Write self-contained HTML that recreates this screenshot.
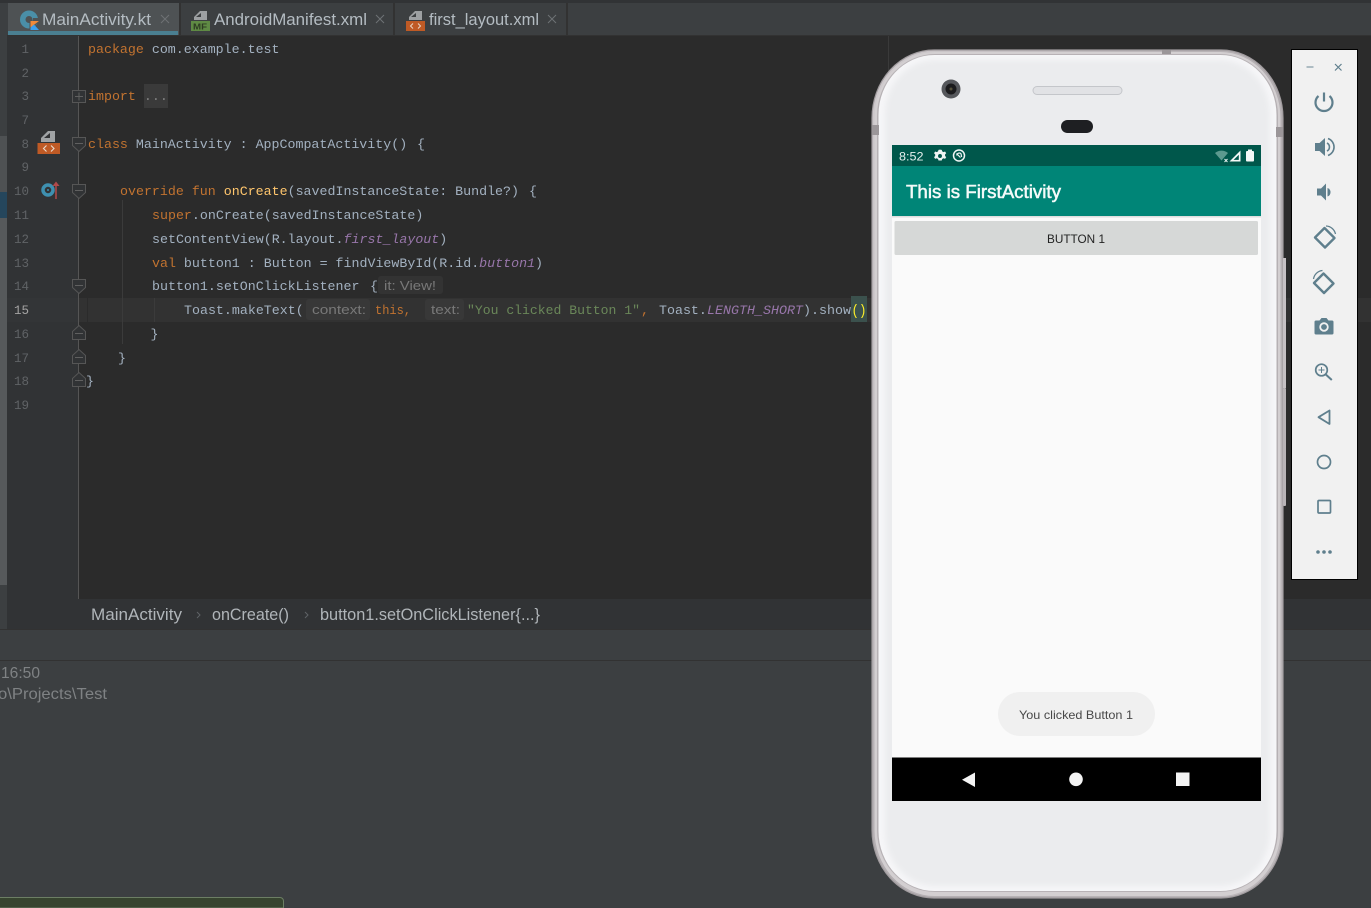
<!DOCTYPE html>
<html>
<head>
<meta charset="utf-8">
<style>
html,body{margin:0;padding:0;width:1371px;height:908px;overflow:hidden;background:#3c3f41}
svg{display:block;position:absolute;left:0;top:0}
text{white-space:pre}
.c{font-family:"Liberation Mono",monospace;font-size:13.3px;fill:#a3b1c0}
.k{fill:#c27330}.f{fill:#ffc66d}.p{fill:#9876aa;font-style:italic}.s{fill:#6a8759}
.n{font-family:"Liberation Mono",monospace;font-size:12.5px;fill:#606366;text-anchor:end}
.h{font-family:"Liberation Sans",sans-serif;font-size:13px;fill:#787878}
.t{font-family:"Liberation Sans",sans-serif;font-size:16.5px;fill:#b4bcc2}
.b{font-family:"Liberation Sans",sans-serif;font-size:16.5px;fill:#b0b5b9}
.o{font-family:"Liberation Sans",sans-serif;font-size:16px;fill:#7f8284}
.r{font-family:"Liberation Sans",sans-serif}
.fold{fill:#313335;stroke:#565656;stroke-width:1}
.ic{fill:#5f7f8d}.is{fill:none;stroke:#5f7f8d}
</style>
</head>
<body>
<svg width="1371" height="908" viewBox="0 0 1371 908" xmlns="http://www.w3.org/2000/svg">
<defs>
<linearGradient id="metal" x1="0" y1="0" x2="1" y2="1">
<stop offset="0" stop-color="#cfcacd"/><stop offset=".5" stop-color="#b3aeb1"/><stop offset="1" stop-color="#bdb8bb"/>
</linearGradient>
<filter id="soft" x="-5%" y="-5%" width="110%" height="110%"><feGaussianBlur stdDeviation="3"/></filter>
</defs>
<!-- base -->
<rect width="1371" height="908" fill="#3c3f41"/>
<rect x="0" y="0" width="1371" height="3" fill="#313335"/>
<!-- left strip -->
<rect x="0" y="136" width="7" height="56" fill="#4e5153"/>
<rect x="0" y="192" width="7" height="26" fill="#25465c"/>
<rect x="0" y="218" width="7" height="367" fill="#56595b"/>
<!-- editor -->
<rect x="7" y="35" width="1364" height="564" fill="#2b2b2b"/>
<rect x="7" y="35" width="72" height="564" fill="#313335"/>
<rect x="7" y="35" width="1364" height="1" fill="#323232"/>
<rect x="79" y="298" width="1292" height="24" fill="#323232"/>
<rect x="7" y="298" width="72" height="24" fill="#333537"/>
<line x1="78.5" y1="36" x2="78.5" y2="599" stroke="#555555"/>
<line x1="888.5" y1="36" x2="888.5" y2="599" stroke="#3a3a3a"/>
<line x1="122.5" y1="200" x2="122.5" y2="344" stroke="#3b3b3b"/>
<line x1="154.5" y1="298" x2="154.5" y2="322" stroke="#3b3b3b"/>
<line x1="87.5" y1="298" x2="87.5" y2="322" stroke="#2b2b2b"/>
<!-- tabs -->
<rect x="8" y="3" width="171" height="32" fill="#4e5254"/>
<rect x="8" y="31" width="170" height="4" fill="#4a7f91"/>
<rect x="179" y="3" width="2" height="32" fill="#323232"/>
<rect x="393" y="3" width="2" height="32" fill="#323232"/>
<rect x="566" y="3" width="2" height="32" fill="#323232"/>
<circle cx="29" cy="19.500" r="9" fill="#4a8fa8"/>
<circle cx="29" cy="19.500" r="3.500" fill="#4e5254"/>
<path d="M33 18h6v3h-6z" fill="#4e5254"/>
<path d="M29.500 20.500h10.500l-5 5 5 5.500H29.500z" fill="#4e5254"/>
<path d="M30.500 21h8.500l-8.500 6.500z" fill="#f08a3a"/>
<path d="M30.500 27.500l3.500-3 5 5.500h-8.500z" fill="#3aa0ef"/>
<text class="t" x="42" y="25" textLength="109" lengthAdjust="spacingAndGlyphs">MainActivity.kt</text>
<path d="M161 15l8 8M169 15l-8 8" stroke="#6e7275" fill="none"/>
<path d="M194 20v-3l6-6h7v9z" fill="#9da0a2"/><path d="M196 17h5v-4z" fill="#3c3f41"/>
<rect x="191" y="21" width="19" height="10" fill="#5f8a44"/>
<text class="r" x="193" y="29.500" font-size="8.500" font-weight="bold" fill="#2d3b22" textLength="14" lengthAdjust="spacingAndGlyphs">MF</text>
<text class="t" x="214" y="25" textLength="153" lengthAdjust="spacingAndGlyphs">AndroidManifest.xml</text>
<path d="M376 15l8 8M384 15l-8 8" stroke="#6e7275" fill="none"/>
<path d="M409 20v-3l6-6h7v9z" fill="#9da0a2"/><path d="M411 17h5v-4z" fill="#3c3f41"/>
<rect x="406" y="21" width="19" height="10" fill="#bf5a25"/>
<path d="M413 23.500l-2.500 2.500 2.500 2.500M418 23.500l2.500 2.500-2.500 2.500" stroke="#e8d8c8" fill="none"/>
<text class="t" x="429" y="25" textLength="110" lengthAdjust="spacingAndGlyphs">first_layout.xml</text>
<path d="M548 15l8 8M556 15l-8 8" stroke="#6e7275" fill="none"/>
<!-- line numbers -->
<text class="n" x="29" y="53">1</text>
<text class="n" x="29" y="77">2</text>
<text class="n" x="29" y="100">3</text>
<text class="n" x="29" y="124">7</text>
<text class="n" x="29" y="148">8</text>
<text class="n" x="29" y="171">9</text>
<text class="n" x="29" y="195">10</text>
<text class="n" x="29" y="219">11</text>
<text class="n" x="29" y="243">12</text>
<text class="n" x="29" y="267">13</text>
<text class="n" x="29" y="290">14</text>
<text class="n" x="29" y="314" style="fill:#a4a3a3">15</text>
<text class="n" x="29" y="338">16</text>
<text class="n" x="29" y="362">17</text>
<text class="n" x="29" y="385">18</text>
<text class="n" x="29" y="409">19</text>
<!-- gutter icons -->
<path d="M41 142v-4l7-7h7v11z" fill="#a0a3a5"/><path d="M44 138h6v-5z" fill="#313335"/>
<rect x="37.500" y="143" width="22.500" height="11" fill="#bf5a25"/>
<path d="M46.500 145.500l-3 3 3 3M51 145.500l3 3-3 3" stroke="#eadccf" fill="none" stroke-width="1.100"/>
<circle cx="48" cy="190" r="5" fill="none" stroke="#3e90b0" stroke-width="3.500"/>
<circle cx="48" cy="190" r="1" fill="#3e90b0"/>
<path d="M56 199v-15" stroke="#b04a4a" stroke-width="1.500"/><path d="M52.500 186l3.500-4.500 3.500 4.500z" fill="#b04a4a"/>
<!-- fold markers -->
<rect class="fold" x="72.500" y="90.500" width="13" height="12"/><path d="M75 96.500h8M79 92.500v8" stroke="#606060" fill="none"/>
<path class="fold" d="M72.500 137.500h13v8l-6.500 6-6.500-6z"/><path d="M75 143.500h8" stroke="#606060"/>
<path class="fold" d="M72.500 184.500h13v8l-6.500 6-6.500-6z"/><path d="M75 190.500h8" stroke="#606060"/>
<path class="fold" d="M72.500 279.500h13v8l-6.500 6-6.500-6z"/><path d="M75 285.500h8" stroke="#606060"/>
<path class="fold" d="M72.500 339.500h13v-8l-6.500-6-6.500 6z"/><path d="M75 333.500h8" stroke="#606060"/>
<path class="fold" d="M72.500 363.500h13v-8l-6.500-6-6.500 6z"/><path d="M75 357.500h8" stroke="#606060"/>
<path class="fold" d="M72.500 386.500h13v-8l-6.500-6-6.500 6z"/><path d="M75 380.500h8" stroke="#606060"/>
<!-- code -->
<text class="c" x="88" y="53"><tspan class="k">package</tspan> com.example.test</text>
<rect x="144" y="84" width="24" height="24" fill="#3a3a3a"/>
<text class="c" x="88" y="100"><tspan class="k">import</tspan> <tspan style="fill:#808080">...</tspan></text>
<text class="c" x="88" y="148"><tspan class="k">class</tspan> MainActivity : AppCompatActivity()</text>
<text class="c" x="417" y="148">{</text>
<text class="c" x="120" y="195"><tspan class="k">override fun</tspan> <tspan class="f">onCreate</tspan>(savedInstanceState: Bundle?)</text>
<text class="c" x="529" y="195">{</text>
<text class="c" x="152" y="219"><tspan class="k">super</tspan>.onCreate(savedInstanceState)</text>
<text class="c" x="152" y="243">setContentView(R.layout.<tspan class="p">first_layout</tspan>)</text>
<text class="c" x="152" y="267"><tspan class="k">val</tspan> button1 : Button = findViewById(R.id.<tspan class="p">button1</tspan>)</text>
<text class="c" x="152" y="290">button1.setOnClickListener</text>
<text class="c" x="370" y="290">{</text>
<rect x="378" y="276" width="65" height="18" rx="3" fill="#333333"/>
<text class="h" x="384" y="290" textLength="52" lengthAdjust="spacingAndGlyphs">it: View!</text>
<text class="c" x="184" y="314">Toast.makeText(</text>
<rect x="306" y="299" width="64" height="21" rx="3" fill="#383838"/>
<text class="h" x="312" y="314" textLength="54" lengthAdjust="spacingAndGlyphs">context:</text>
<text class="c k" x="375" y="314" textLength="36" lengthAdjust="spacingAndGlyphs">this,</text>
<rect x="425" y="299" width="39" height="21" rx="3" fill="#383838"/>
<text class="h" x="431" y="314" textLength="29" lengthAdjust="spacingAndGlyphs">text:</text>
<text class="c s" x="467" y="314" textLength="173" lengthAdjust="spacingAndGlyphs">"You clicked Button 1"</text>
<text class="c k" x="641" y="314">,</text>
<text class="c" x="659" y="314">Toast.</text>
<text class="c p" x="707" y="314" textLength="96" lengthAdjust="spacingAndGlyphs">LENGTH_SHORT</text>
<text class="c" x="803" y="314" textLength="48" lengthAdjust="spacingAndGlyphs">).show</text>
<rect x="851" y="296" width="16" height="26" fill="#3b514d"/>
<text class="c" x="851.500" y="315" style="fill:#ffef28;font-size:15px" textLength="15" lengthAdjust="spacingAndGlyphs">()</text>
<text class="c" x="150.500" y="338">}</text>
<text class="c" x="118" y="362">}</text>
<text class="c" x="86" y="385">}</text>
<!-- breadcrumb -->
<rect x="7" y="599" width="1364" height="30" fill="#313335"/>
<rect x="0" y="629" width="1371" height="1" fill="#323232"/>
<rect x="0" y="660" width="1371" height="1" fill="#323232"/>
<text class="b" x="91" y="620" textLength="91" lengthAdjust="spacingAndGlyphs">MainActivity</text>
<path d="M197 612l3 3-3 3" stroke="#5f6366" fill="none"/>
<text class="b" x="212" y="620" textLength="77" lengthAdjust="spacingAndGlyphs">onCreate()</text>
<path d="M305 612l3 3-3 3" stroke="#5f6366" fill="none"/>
<text class="b" x="320" y="620" textLength="220" lengthAdjust="spacingAndGlyphs">button1.setOnClickListener{...}</text>
<text class="o" x="1" y="678" textLength="39" lengthAdjust="spacingAndGlyphs">16:50</text>
<text class="o" x="-2" y="699" textLength="109" lengthAdjust="spacingAndGlyphs">o\Projects\Test</text>
<!-- bottom-left balloon -->
<path d="M-2 908v-10.500h282a3.500 3.500 0 0 1 3.500 3.500v7z" fill="#37442f" stroke="#6c7e64"/>
<!-- phone -->
<rect x="872" y="50" width="411" height="848" rx="62" ry="68" fill="url(#metal)" stroke="#a09b9e" stroke-width="1.200"/>
<rect x="874.500" y="52" width="406" height="844" rx="60" ry="66" fill="#d3cfd1"/>
<rect x="877" y="54" width="401" height="838" rx="58" ry="62" fill="#b6b1b4"/>
<rect x="878.500" y="55" width="398" height="836" rx="56" ry="60" fill="#f6f6f8"/>
<rect x="885" y="60" width="385" height="826" rx="50" ry="54" fill="#ebecee" filter="url(#soft)"/>
<rect x="872" y="125" width="7" height="10" fill="#9b9699"/>
<rect x="1276" y="127" width="7" height="10" fill="#9b9699"/>
<rect x="1162" y="50" width="9" height="4" fill="#9b9699"/>
<rect x="1283" y="258" width="3" height="130" fill="#c6c1c4"/>
<rect x="1283" y="388" width="3" height="118" rx="1" fill="#b9b4b7"/>
<circle cx="951" cy="89" r="9.500" fill="#56585c"/>
<circle cx="951" cy="89" r="5.500" fill="#1b1b1d"/>
<circle cx="951" cy="89" r="1.500" fill="#54503a"/>
<rect x="1033" y="86.500" width="89" height="8" rx="4" fill="#e1e2e5" stroke="#c4c6ca" stroke-width="1"/>
<rect x="1061" y="120" width="32" height="13" rx="6.500" fill="#1e1f22"/>
<!-- screen -->
<rect x="892" y="145" width="369" height="656" fill="#fafafa"/>
<rect x="892" y="145" width="369" height="21" fill="#00574b"/>
<rect x="892" y="166" width="369" height="50" fill="#008577"/>
<rect x="892" y="216" width="369" height="1.500" fill="#dedede"/>
<text class="r" x="899" y="160.500" font-size="12" fill="#e6f0ee" textLength="24.500" lengthAdjust="spacingAndGlyphs">8:52</text>
<g transform="translate(940 156) scale(1.150) translate(-940 -156)">
<path d="M940 150.500l1.500.200.400 1.300 1.200.600 1.300-.500 1 1.500-1 1v1.400l1 1-1 1.500-1.300-.500-1.200.600-.400 1.300h-2.800l-.400-1.300-1.200-.600-1.300.500-1-1.500 1-1v-1.400l-1-1 1-1.500 1.300.500 1.200-.600.400-1.300z" fill="#f0f5f4"/>
<circle cx="940" cy="156" r="1.700" fill="#00574b"/>
</g>
<circle cx="959" cy="155.500" r="5.500" fill="none" stroke="#f0f5f4" stroke-width="1.500"/>
<path d="M956.500 153.500l4 4M956.800 155.500a2.400 2.400 0 0 1 4.300-1.500l.500 3" fill="none" stroke="#f0f5f4" stroke-width="1.200"/>
<path d="M1215 153a10 10 0 0 1 13 0l-6.500 7.500z" fill="#5c9a8f"/>
<path d="M1224.500 159l3 3M1227.500 159l-3 3" stroke="#e6f0ee" stroke-width="1"/>
<path d="M1240.500 150.500v11h-11zM1238.800 154.700l-5.200 5.200h5.200z" fill="#f4f8f7" fill-rule="evenodd"/>
<rect x="1246" y="151" width="8" height="10.500" rx="1" fill="#f4f8f7"/><rect x="1248" y="149.500" width="4" height="2" fill="#f4f8f7"/>
<text class="r" x="906" y="198" font-size="18" fill="#f4faf9" stroke="#f4faf9" stroke-width=".5" textLength="155" lengthAdjust="spacingAndGlyphs">This is FirstActivity</text>
<rect x="894.500" y="221" width="363.500" height="34" rx="1.500" fill="#d6d8d7"/>
<text class="r" x="1047" y="243" font-size="12" fill="#232323" textLength="58" lengthAdjust="spacingAndGlyphs">BUTTON 1</text>
<rect x="998" y="692" width="157" height="44" rx="22" fill="#f0f0f0"/>
<text class="r" x="1019" y="719" font-size="12" fill="#484848" textLength="114" lengthAdjust="spacingAndGlyphs">You clicked Button 1</text>
<rect x="892" y="757.500" width="369" height="43.500" fill="#000"/>
<path d="M975 772.500v14.500l-13-7.200z" fill="#f4f4f4"/>
<circle cx="1076" cy="779.300" r="6.800" fill="#f4f4f4"/>
<rect x="1176" y="772.500" width="13.500" height="13.500" fill="#f4f4f4"/>
<!-- emulator sidebar -->
<rect x="1291.500" y="49.500" width="66" height="530" fill="#f1f1f1" stroke="#000" stroke-width="1"/>
<path d="M1306.500 67h7" stroke="#8aa0aa" stroke-width="1.300"/>
<path d="M1335 64l6.500 6.500M1341.500 64l-6.500 6.500" stroke="#5f7f8d" stroke-width="1.200"/>
<!-- power -->
<path class="is" stroke-width="2.200" d="M1324 92.500v9M1318.500 96a8.500 8.500 0 1 0 11 0"/>
<!-- vol up -->
<path class="ic" d="M1315 143h4.500l5.500-5v18l-5.500-5H1315z"/>
<path class="is" stroke-width="1.600" d="M1327 143a4.500 4.500 0 0 1 0 8M1328 138.500a9 9 0 0 1 0 17"/>
<!-- vol down -->
<path class="ic" d="M1317 188.500h4l5-5v17l-5-5h-4z"/>
<path class="ic" d="M1327.500 188a4.500 4.500 0 0 1 0 8.500z"/>
<!-- rotate left -->
<path class="is" stroke-width="2.400" d="M1315 237.500l9.500-9.500 10 10-9.500 9.500z" stroke-linejoin="round"/>
<path class="is" stroke-width="1.300" d="M1326 226a10 10 0 0 1 9.500 8"/>
<!-- rotate right -->
<path class="is" stroke-width="2.400" d="M1314 283l9.500-9.500 10 10-9.500 9.500z" stroke-linejoin="round"/>
<path class="is" stroke-width="1.300" d="M1313.500 279a10 10 0 0 1 9-8.500"/>
<!-- camera -->
<path class="ic" d="M1316 320.500h3.500l2-2.500h5l2 2.500h3.500a1.500 1.500 0 0 1 1.500 1.500v11a1.500 1.500 0 0 1-1.500 1.500h-16a1.500 1.500 0 0 1-1.500-1.500v-11a1.500 1.500 0 0 1 1.500-1.500z"/>
<circle cx="1324" cy="327" r="3.800" fill="none" stroke="#f1f1f1" stroke-width="1.800"/>
<!-- zoom -->
<circle cx="1321.500" cy="370" r="5.800" class="is" stroke-width="1.700"/>
<path class="is" stroke-width="2" d="M1325.800 374.500l6 5.500"/>
<path class="is" stroke-width="1" d="M1321.500 367v6M1318.500 370h6"/>
<!-- back -->
<path class="is" stroke-width="1.800" stroke-linejoin="round" d="M1329.500 410.500v13.500l-11-6.800z"/>
<!-- home -->
<circle cx="1324" cy="462" r="6.500" class="is" stroke-width="1.700"/>
<!-- square -->
<rect x="1318" y="500.500" width="12.500" height="12.500" rx="1" class="is" stroke-width="1.700"/>
<!-- more -->
<circle cx="1318" cy="552" r="1.800" class="ic"/><circle cx="1324" cy="552" r="1.800" class="ic"/><circle cx="1330" cy="552" r="1.800" class="ic"/>
</svg>
</body>
</html>
